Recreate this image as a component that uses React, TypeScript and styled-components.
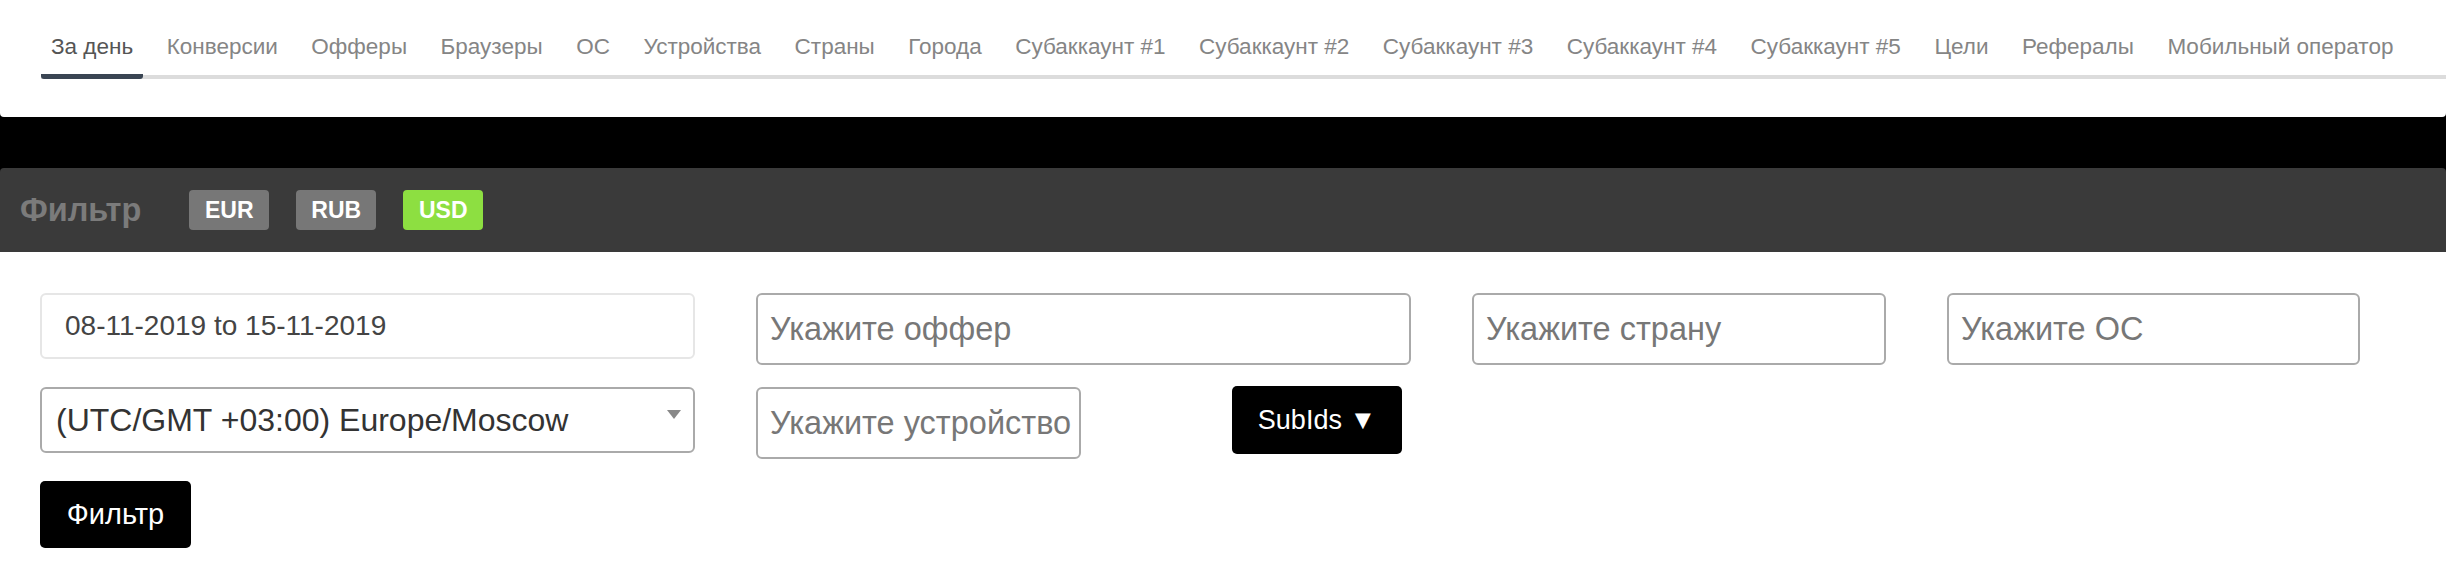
import React from "react";
import styled, { createGlobalStyle } from "styled-components";

const GlobalStyle = createGlobalStyle`
  body {
    margin: 0;
    background: #000;
    font-family: "Liberation Sans", Arial, sans-serif;
  }
`;

const TopCard = styled.div`
  background: #fff;
  height: 117px;
  padding-top: 34px;
  box-sizing: border-box;
  border-radius: 0 0 4px 4px;
  margin-bottom: 51px;
`;

const TabList = styled.ul`
  display: flex;
  list-style: none;
  margin: 0 0 0 41px;
  padding: 0;
  border-bottom: 4px solid #dcdcdc;
`;

const Tab = styled.li<{ $active?: boolean }>`
  padding: 0 10px 14px;
  margin-right: 13.5px;
  margin-bottom: -4px;
  font-size: 22.5px;
  line-height: 26px;
  white-space: nowrap;
  color: ${(p) => (p.$active ? "#555" : "#858585")};
  border-bottom: ${(p) => (p.$active ? "5px solid #3a4553" : "4px solid transparent")};
  border-radius: 3px;
  cursor: pointer;
`;

const FilterCard = styled.div`
  border-radius: 4px 4px 0 0;
  overflow: hidden;
`;

const FilterHeader = styled.div`
  height: 84px;
  background: #3a3a3a;
  display: flex;
  align-items: center;
  padding-left: 20px;
`;

const FilterTitle = styled.h3`
  margin: 0 48px 0 0;
  font-size: 32.5px;
  font-weight: bold;
  color: #7b7b7b;
`;

const Currency = styled.span<{ $active?: boolean }>`
  width: 80px;
  height: 40px;
  margin-right: 27px;
  border-radius: 4px;
  display: flex;
  align-items: center;
  justify-content: center;
  font-size: 23px;
  font-weight: bold;
  color: #fff;
  background: ${(p) => (p.$active ? "#8ddf41" : "#777")};
`;

const FilterBody = styled.div`
  background: #fff;
  padding: 41px 0 60px 40px;
  display: grid;
  grid-template-columns: 655px 655px 414px 413px;
  column-gap: 61px;
  row-gap: 22px;
  align-items: start;
`;

const TextField = styled.input<{ $light?: boolean }>`
  box-sizing: border-box;
  width: 100%;
  height: ${(p) => (p.$light ? "66px" : "72px")};
  border: 2px solid ${(p) => (p.$light ? "#e6e6e6" : "#aaa")};
  border-radius: 6px;
  padding: 0 0 0 ${(p) => (p.$light ? "23px" : "12px")};
  font-family: inherit;
  font-size: ${(p) => (p.$light ? "28px" : "32.5px")};
  color: #444;
  outline: none;

  &::placeholder {
    color: #777;
  }
`;

const SelectWrap = styled.div`
  position: relative;

  &::after {
    content: "";
    position: absolute;
    right: 14px;
    top: 23px;
    border-left: 7px solid transparent;
    border-right: 7px solid transparent;
    border-top: 9px solid #888;
    pointer-events: none;
  }
`;

const Select = styled.select`
  appearance: none;
  box-sizing: border-box;
  width: 100%;
  height: 66px;
  border: 2px solid #aaa;
  border-radius: 6px;
  background: #fff;
  padding: 0 0 0 14px;
  font-family: inherit;
  font-size: 32px;
  color: #333;
  outline: none;
`;

const DeviceCell = styled.div`
  display: flex;
  align-items: flex-start;
`;

const DarkButton = styled.button<{ $wide?: boolean }>`
  box-sizing: border-box;
  height: ${(p) => (p.$wide ? "68px" : "67px")};
  width: ${(p) => (p.$wide ? "170px" : "151px")};
  border: none;
  border-radius: 5px;
  background: #000;
  color: #fff;
  font-family: inherit;
  font-size: ${(p) => (p.$wide ? "27px" : "29px")};
  cursor: pointer;
`;

const SubIdsButton = styled(DarkButton)`
  margin: -1px 9px 0 auto;
`;

const tabs = [
  "За день",
  "Конверсии",
  "Офферы",
  "Браузеры",
  "ОС",
  "Устройства",
  "Страны",
  "Города",
  "Субаккаунт #1",
  "Субаккаунт #2",
  "Субаккаунт #3",
  "Субаккаунт #4",
  "Субаккаунт #5",
  "Цели",
  "Рефералы",
  "Мобильный оператор",
];

const App: React.FC = () => {
  return (
    <>
      <GlobalStyle />
      <TopCard>
        <TabList>
          {tabs.map((t, i) => (
            <Tab key={t} $active={i === 0}>
              {t}
            </Tab>
          ))}
        </TabList>
      </TopCard>

      <FilterCard>
        <FilterHeader>
          <FilterTitle>Фильтр</FilterTitle>
          <Currency>EUR</Currency>
          <Currency>RUB</Currency>
          <Currency $active>USD</Currency>
        </FilterHeader>

        <FilterBody>
          <TextField $light readOnly value="08-11-2019 to 15-11-2019" />
          <TextField placeholder="Укажите оффер" />
          <TextField placeholder="Укажите страну" />
          <TextField placeholder="Укажите ОС" />

          <SelectWrap>
            <Select defaultValue="msk">
              <option value="msk">(UTC/GMT +03:00) Europe/Moscow</option>
            </Select>
          </SelectWrap>
          <DeviceCell>
            <TextField placeholder="Укажите устройство" style={{ width: 325 }} />
            <SubIdsButton $wide>SubIds ▼</SubIdsButton>
          </DeviceCell>
          <div />
          <div />

          <DarkButton>Фильтр</DarkButton>
        </FilterBody>
      </FilterCard>
    </>
  );
};

export default App;
